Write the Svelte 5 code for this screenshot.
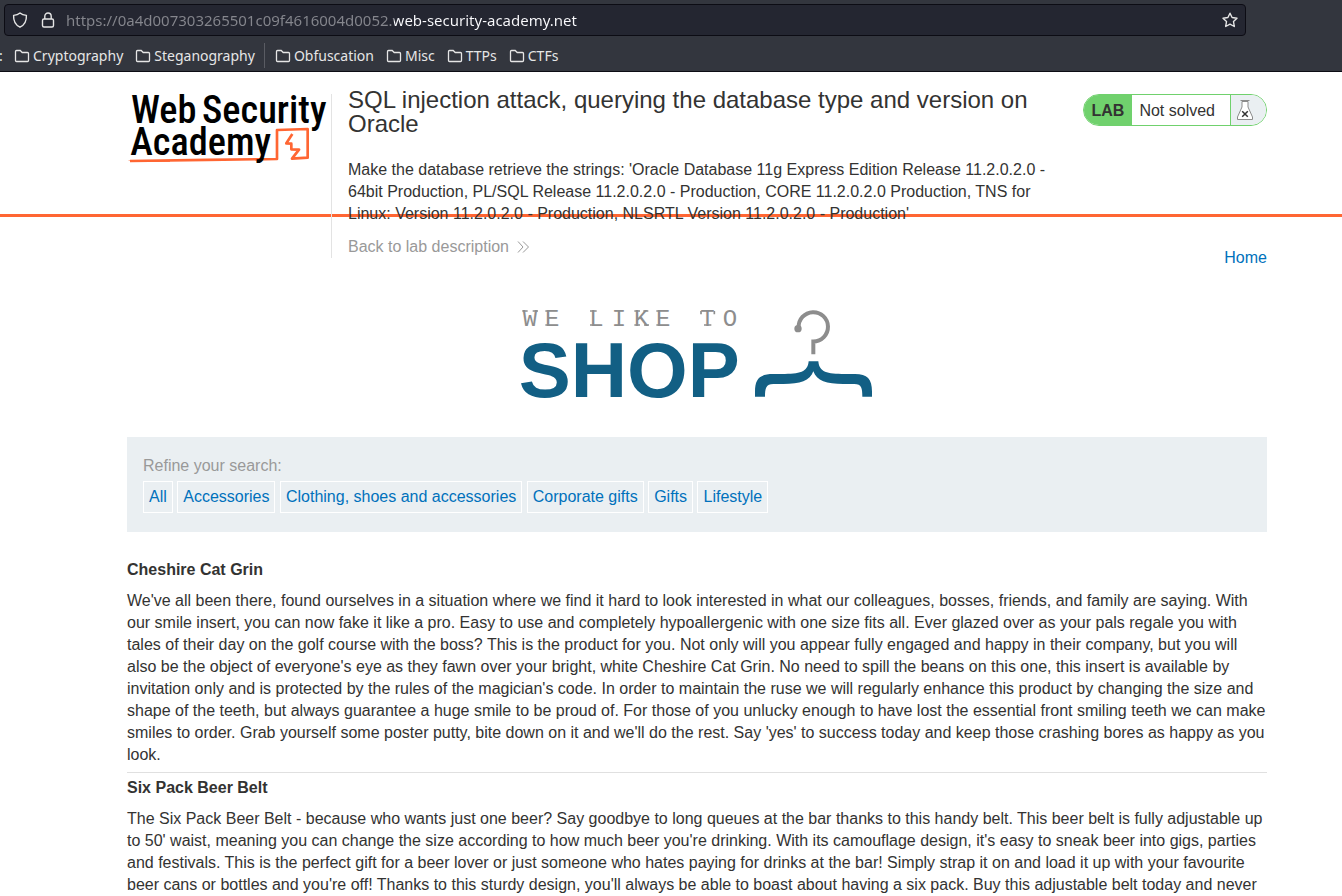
<script>
  const folders = ['Cryptography', 'Steganography', 'Obfuscation', 'Misc', 'TTPs', 'CTFs'];
  const categories = ['All', 'Accessories', 'Clothing, shoes and accessories', 'Corporate gifts', 'Gifts', 'Lifestyle'];
  const products = [
    {
      name: 'Cheshire Cat Grin',
      text: "We've all been there, found ourselves in a situation where we find it hard to look interested in what our colleagues, bosses, friends, and family are saying. With our smile insert, you can now fake it like a pro. Easy to use and completely hypoallergenic with one size fits all. Ever glazed over as your pals regale you with tales of their day on the golf course with the boss? This is the product for you. Not only will you appear fully engaged and happy in their company, but you will also be the object of everyone's eye as they fawn over your bright, white Cheshire Cat Grin. No need to spill the beans on this one, this insert is available by invitation only and is protected by the rules of the magician's code. In order to maintain the ruse we will regularly enhance this product by changing the size and shape of the teeth, but always guarantee a huge smile to be proud of. For those of you unlucky enough to have lost the essential front smiling teeth we can make smiles to order. Grab yourself some poster putty, bite down on it and we'll do the rest. Say 'yes' to success today and keep those crashing bores as happy as you look."
    },
    {
      name: 'Six Pack Beer Belt',
      text: "The Six Pack Beer Belt - because who wants just one beer? Say goodbye to long queues at the bar thanks to this handy belt. This beer belt is fully adjustable up to 50' waist, meaning you can change the size according to how much beer you're drinking. With its camouflage design, it's easy to sneak beer into gigs, parties and festivals. This is the perfect gift for a beer lover or just someone who hates paying for drinks at the bar! Simply strap it on and load it up with your favourite beer cans or bottles and you're off! Thanks to this sturdy design, you'll always be able to boast about having a six pack. Buy this adjustable belt today and never"
    }
  ];
  let url = $state('https://0a4d007303265501c09f4616004d0052.web-security-academy.net');
</script>

<div class="browser">
  <div class="address">
    <svg class="ico" viewBox="0 0 16 16" aria-hidden="true">
      <path d="M8 1 C6.4 2.4 4 3.2 1.6 3.4 C1.3 8.8 3.4 13 8 15.2 C12.6 13 14.7 8.8 14.4 3.4 C12 3.2 9.6 2.4 8 1Z" />
    </svg>
    <svg class="ico lock" viewBox="0 0 16 16" aria-hidden="true">
      <rect x="2.5" y="7" width="11" height="8" rx="1.5" />
      <path d="M4.8 7V4.2a3.2 3.2 0 0 1 6.4 0V7" />
    </svg>
    <input type="text" aria-label="Address" bind:value={url} spellcheck="false" />
    <button class="star" aria-label="Bookmark this page">
      <svg class="ico" viewBox="0 0 16 16" aria-hidden="true">
        <path d="M8 1.2 L10.1 5.5 L15 6.2 L11.5 9.6 L12.3 14.5 L8 12.2 L3.7 14.5 L4.5 9.6 L1 6.2 L5.9 5.5Z" />
      </svg>
    </button>
  </div>
  <nav class="bookmarks" aria-label="Bookmarks">
    <span class="cut">:</span>
    {#each folders as folder, i}
      {#if i === 2}<span class="sep"></span>{/if}
      <button>
        <svg class="folder" viewBox="0 0 16 16" aria-hidden="true">
          <path d="M1.5 12.5v-9q0-1 1-1h3.7l2 2h5.3q1 0 1 1v7q0 1-1 1h-11q-1 0-1-1Z" />
        </svg>{folder}
      </button>
    {/each}
  </nav>
</div>

<div class="page">
  <header>
    <div class="wrap head">
      <a class="academy" href="#academy" aria-label="Web Security Academy">
        <svg viewBox="21 18 603 240" width="201" height="80">
          <text x="33" y="128">Web</text>
          <text x="246" y="128">Security</text>
          <path class="mark" d="M30 243 C140 241 350 239 471 237 L471 150 L563 147 L563 233 L516 236 L537 209 L514 208 L514 191 L499 190 L517 162" />
          <path class="mark tail" d="M23 241 L150 240 L150 245 L45 246Z" />
          <text x="31" y="225">Academy</text>
        </svg>
      </a>
      <div class="intro">
        <h1>SQL injection attack, querying the database type and version on Oracle</h1>
        <p>Make the database retrieve the strings: 'Oracle Database 11g Express Edition Release 11.2.0.2.0 - 64bit Production, PL/SQL Release 11.2.0.2.0 - Production, CORE 11.2.0.2.0 Production, TNS for Linux: Version 11.2.0.2.0 - Production, NLSRTL Version 11.2.0.2.0 - Production'</p>
        <a class="back" href="#description">Back to lab description
          <svg viewBox="0 0 12 12" width="12" height="12" aria-hidden="true"><path d="M1 0.5 L6 6 L1 11.5 M6 0.5 L11.5 6 L6 11.5" /></svg>
        </a>
      </div>
      <div class="side">
        <div class="status">
          <strong>LAB</strong>
          <span>Not solved</span>
          <i>
            <svg viewBox="0 0 18 22" width="18" height="22" aria-hidden="true">
              <path class="glass" d="M6 2.5 H12 V8 L16.5 18 V20.5 H1.5 V18 L6 8Z" />
              <path class="lip" d="M4.5 1.5 H13.5" />
              <path class="cross" d="M6.2 12.2 L11.8 17.8 M11.8 12.2 L6.2 17.8" />
            </svg>
          </i>
        </div>
        <a href="#home">Home</a>
      </div>
    </div>
  </header>

  <main class="wrap">
    <div class="brand">
      <svg viewBox="21 0 1080 360" width="360" height="120" role="img" aria-label="We like to shop">
        <text class="tag" y="92" x="38 105 172 238 305 372 438 505 571 638">WE LIKE TO</text>
        <path class="slab" d="M37 48h16M68 48h16M106 48h10M106 90h10M240 48h20M240 90h10M373 48h17M373 90h17M400 48h15M402 90h15M439 48h10M439 90h10M582 90h22M573 48v10M613 48v10" />
        <text class="shop" x="26" y="305">SHOP</text>
        <path class="hook" d="M866 98 A44 44 0 1 1 910 139.5 V178" />
        <circle cx="864" cy="101" r="11" />
        <path class="hanger" d="M735 305 V290 C735 250 750 237 790 237 H815 C870 237 893 232 896 199 H925 C928 232 950 237 1005 237 H1035 C1072 237 1086 252 1086 290 V305 H1057 C1057 280 1055 267 1033 267 H1000 C950 267 920 258 910 229 C900 258 870 267 820 267 H790 C768 267 765 280 765 305Z" />
      </svg>
    </div>

    <section class="filters">
      <h2>Refine your search:</h2>
      <div>
        {#each categories as category}
          <a href="#filter">{category}</a>{' '}
        {/each}
      </div>
    </section>

    {#each products as product}
      <article>
        <h3>{product.name}</h3>
        <p>{product.text}</p>
      </article>
    {/each}
  </main>
</div>

<style>
  :global(body) {
    background: #fff;
    color: #333332;
    font: 16px/22px "Liberation Sans", Arial, sans-serif;
    overflow: hidden;
  }
  h1, h2, h3, p { margin: 0; }
  a { color: #0071bc; text-decoration: none; }
  button {
    border: 0;
    padding: 0;
    background: none;
    color: inherit;
    font: inherit;
  }

  .browser {
    padding-top: 4px;
    background: #33363e;
    border-bottom: 1px solid #0c0c14;
    color: #e6e6e6;
    font: 14px/20px "Noto Sans", sans-serif;
  }
  .address {
    display: flex;
    align-items: center;
    box-sizing: border-box;
    height: 32px;
    margin: 0 96px 0 4px;
    padding: 0 7px;
    background: #242631;
    border: 1px solid #0c0c14;
    border-radius: 4px;
  }
  .ico {
    display: block;
    width: 16px;
    height: 16px;
    fill: none;
    stroke: #e6e6e6;
    stroke-width: 1.4;
    stroke-linejoin: round;
  }
  .lock { margin: 0 10px 0 12px; }
  input {
    flex: 1;
    min-width: 0;
    padding: 0;
    border: 0;
    outline: 0;
    font: inherit;
    font-size: 15px;
    color: transparent;
    background: linear-gradient(90deg, #85868d 328px, #fbfbfe 328px);
    background-clip: text;
    -webkit-background-clip: text;
  }
  .bookmarks {
    display: flex;
    align-items: center;
    height: 31px;
    padding-top: 4px;
    white-space: nowrap;
  }
  .bookmarks button {
    display: flex;
    align-items: center;
    gap: 3px;
    margin-right: 12px;
  }
  .cut { width: 15px; margin-left: -1px; }
  .folder {
    width: 16px;
    height: 16px;
    fill: none;
    stroke: #e6e6e6;
    stroke-width: 1.3;
  }
  .sep {
    width: 1px;
    height: 25px;
    margin: 0 10px 0 -3px;
    background: #5a5c63;
  }

  .page { padding-left: 52px; }
  .wrap { max-width: 1140px; margin: 0 auto; }
  header { position: relative; }
  header::before {
    content: "";
    position: absolute;
    top: 142px;
    left: -52px;
    right: 0;
    height: 3px;
    background: #ff6633;
  }
  .head {
    position: relative;
    display: flex;
    padding-top: 14px;
  }
  .academy {
    width: 204px;
    margin-top: 8px;
    margin-bottom: 11px;
    border-right: 1px solid #e3e3e3;
  }
  .academy svg { display: block; margin-top: -8px; }
  .academy text {
    font: 500 115px "Roboto Condensed", Roboto, sans-serif;
    fill: #000;
  }
  .mark {
    fill: none;
    stroke: #ff6633;
    stroke-width: 8;
    stroke-linejoin: round;
  }
  .tail { fill: #ff6633; stroke: none; }
  .intro {
    flex: 1;
    padding: 2px 32px 11px 16px;
  }
  h1 {
    margin-bottom: 23px;
    font-size: 24px;
    line-height: 24px;
    font-weight: 400;
  }
  .back {
    display: flex;
    align-items: center;
    gap: 8px;
    margin-top: 11px;
    color: #999;
  }
  .back svg { fill: none; stroke: #999; }
  .side {
    display: flex;
    flex-direction: column;
    justify-content: space-between;
    align-items: flex-end;
    padding-top: 8px;
  }
  .status {
    display: flex;
    box-sizing: border-box;
    height: 32px;
    border: 1px solid #70d16d;
    border-radius: 16px;
    overflow: hidden;
    line-height: 31px;
  }
  .status strong { padding: 0 8px; background: #70d16d; line-height: 32px; }
  .status span { padding: 0 15px 0 7px; }
  .status i {
    display: flex;
    align-items: center;
    width: 30px;
    padding-left: 5px;
    border-left: 1px solid #70d16d;
    background: #eaeff2;
  }
  .glass { fill: #fff; stroke: #8b8b8b; }
  .lip { fill: none; stroke: #8b8b8b; }
  .cross { stroke: #333; stroke-width: 1.5; }

  .brand { display: flex; justify-content: center; padding: 26px 0 22px; }
  .tag { font: 72px "Liberation Mono", monospace; fill: #8d8d8d; white-space: pre; }
  .slab { fill: none; stroke: #8d8d8d; stroke-width: 5; }
  .shop { font: bold 234px "Liberation Sans", Arial, sans-serif; fill: #125f84; }
  .hook { fill: none; stroke: #8d8d8d; stroke-width: 12; }
  circle { fill: #8d8d8d; }
  .hanger { fill: #125f84; }

  .filters {
    margin-bottom: 23px;
    padding: 18px 16px 19px;
    background: #eaeff2;
  }
  h2 { margin-bottom: 4px; color: #999; font-size: 16px; font-weight: 400; }
  .filters a {
    display: inline-block;
    padding: 4px 5px;
    border: 1px solid #fff;
    vertical-align: top;
  }
  article { padding: 4px 0 6px; }
  article + article { border-top: 1px solid #e0e0e0; }
  h3 { margin-bottom: 9px; font-size: 16px; }
</style>
